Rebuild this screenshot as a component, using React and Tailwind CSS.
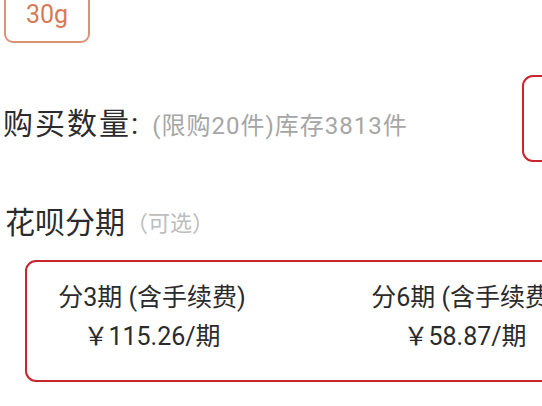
import React from "react";

export default function App() {
  return (
    <div
      className="relative w-[542px] h-[406px] overflow-hidden bg-white flex flex-col"
      style={{ fontFamily: 'Roboto, "Noto Sans CJK SC", sans-serif' }}
    >
      <div className="mt-[-12px] ml-[4px] h-[55px] w-[86px] shrink-0 border-2 border-[#dc9276] rounded-[9px] flex items-center justify-center pb-[2px] text-[25px] text-[#d67a57]">
        30g
      </div>

      <div className="mt-[32px] h-[87px] shrink-0 flex items-center">
        <div className="flex items-baseline pl-[3px] pt-[10px]">
          <span className="text-[30px] text-[#2b2b2b] tracking-[2px]">购买数量:</span>
          <span className="ml-[12px] text-[24px] text-[#a6a6a6] tracking-[1px]">(限购20件)库存3813件</span>
        </div>
        <div className="ml-auto mr-[-60px] w-[80px] h-[87px] border-[2.5px] border-[#c9252d] rounded-[11px]" />
      </div>

      <div className="mt-[40px] h-[40px] shrink-0 flex items-center pl-[5px]">
        <span className="text-[30px] text-[#2b2b2b]">花呗分期</span>
        <span className="ml-[1px] text-[22px] text-[#bdbdbd] pt-[2px]">（可选）</span>
      </div>

      <div className="mt-[18px] ml-[25px] w-[600px] h-[122px] shrink-0 border-[2.5px] border-[#c9252d] rounded-[11px] flex gap-[63px] pt-[16px]">
        <div className="w-[250px] shrink-0 flex flex-col items-center text-[25px] leading-[39px] text-[#2b2b2b]">
          <span className="whitespace-nowrap">分3期 (含手续费)</span>
          <span className="whitespace-nowrap">￥115.26/期</span>
        </div>
        <div className="w-[250px] shrink-0 flex flex-col items-center text-[25px] leading-[39px] text-[#2b2b2b]">
          <span className="whitespace-nowrap">分6期 (含手续费)</span>
          <span className="whitespace-nowrap">￥58.87/期</span>
        </div>
      </div>
    </div>
  );
}
